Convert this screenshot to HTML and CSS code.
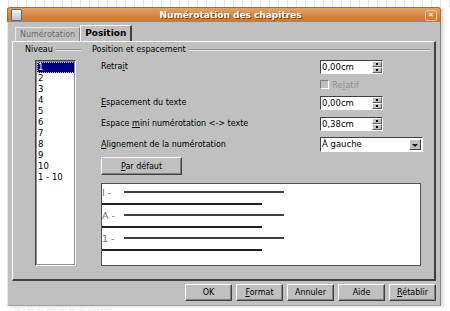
FILE: index.html
```html
<!DOCTYPE html>
<html lang="fr">
<head>
    <meta charset="UTF-8">
    <title>Numérotation des chapitres</title>
    <link rel="stylesheet" href="styles.css">
</head>
<body>
    <div class="ruler"></div>

    <div class="window">
        <div class="titlebar">
            <span class="app-icon"></span>
            <span class="title">Numérotation des chapitres</span>
            <span class="close">&#x2715;</span>
        </div>

        <div class="client">
            <div class="tabs">
                <div class="tab">Numérotation</div>
                <div class="tab active">Position</div>
            </div>

            <div class="panel">
                <div class="level-col">
                    <div class="group-head"><span>Niveau</span><i></i></div>
                    <div class="listbox">
                        <div class="item selected">1</div>
                        <div class="item">2</div>
                        <div class="item">3</div>
                        <div class="item">4</div>
                        <div class="item">5</div>
                        <div class="item">6</div>
                        <div class="item">7</div>
                        <div class="item">8</div>
                        <div class="item">9</div>
                        <div class="item">10</div>
                        <div class="item">1 - 10</div>
                    </div>
                </div>

                <div class="pos-col">
                    <div class="group-head"><span>Position et espacement</span><i></i></div>

                    <div class="form">
                        <div class="row r1">
                            <label>Retra<u>i</u>t</label>
                            <div class="spin"><span class="val">0,00cm</span><span class="btns"><b></b><b></b></span></div>
                        </div>
                        <div class="row relatif">
                            <label></label>
                            <div class="check"><span class="box"></span>Re<u>l</u>atif</div>
                        </div>
                        <div class="row r3">
                            <label><u>E</u>spacement du texte</label>
                            <div class="spin"><span class="val">0,00cm</span><span class="btns"><b></b><b></b></span></div>
                        </div>
                        <div class="row r4">
                            <label>Espace <u>m</u>ini numérotation &lt;-&gt; texte</label>
                            <div class="spin"><span class="val">0,38cm</span><span class="btns"><b></b><b></b></span></div>
                        </div>
                        <div class="row r5">
                            <label><u>A</u>lignement de la numérotation</label>
                            <div class="combo"><span class="val">À gauche</span><span class="drop"></span></div>
                        </div>

                        <button class="btn default"><u>P</u>ar défaut</button>

                        <div class="preview">
                            <div class="pv-row"><span class="num">I -</span><span class="line"></span></div>
                            <div class="pv-sep"></div>
                            <div class="pv-row"><span class="num">A -</span><span class="line"></span></div>
                            <div class="pv-sep"></div>
                            <div class="pv-row"><span class="num">1 -</span><span class="line"></span></div>
                            <div class="pv-sep"></div>
                        </div>
                    </div>
                </div>
            </div>

            <div class="actions">
                <button class="btn">OK</button>
                <button class="btn"><u>F</u>ormat</button>
                <button class="btn">Annuler</button>
                <button class="btn">Aide</button>
                <button class="btn"><u>R</u>établir</button>
            </div>
        </div>
    </div>

    <p class="behind">lors de un spécial au un travaillé</p>
</body>
</html>
```

FILE: styles.css
```css
body {
    margin: 0;
    background: #fff;
    font-family: "DejaVu Sans", sans-serif;
    font-size: 8px;
    color: #000;
    width: 450px;
    height: 311px;
    overflow: hidden;
}

u {
    text-decoration: underline;
}

.ruler {
    height: 7px;
    background: repeating-linear-gradient(to right, transparent 0, transparent 8px, #e4e4e4 8px, #e4e4e4 9px);
}

.window {
    margin-left: 7px;
    width: 434px;
    box-shadow: 3px 1px 2px rgba(0, 0, 0, 0.12);
}

.titlebar {
    height: 14px;
    background: linear-gradient(#e3a265, #cf8442 60%, #c77a38);
    border: 1px solid #b06a2c;
    border-bottom: none;
    border-radius: 3px 3px 0 0;
    display: flex;
    align-items: center;
}

.app-icon {
    width: 9px;
    height: 10px;
    margin-left: 3px;
    background: linear-gradient(#f4f4f4, #b8c4cc);
    border: 1px solid #5a6a78;
    border-radius: 1px;
}

.title {
    flex: 1;
    text-align: center;
    color: #fff;
    font-weight: bold;
    font-size: 9px;
    text-shadow: 1px 1px 0 #7a4818;
    margin-left: 14px;
}

.close {
    width: 10px;
    height: 9px;
    margin-right: 3px;
    border: 1px solid #f0c090;
    border-radius: 2px;
    color: #fff;
    font-size: 7px;
    line-height: 9px;
    text-align: center;
    font-weight: bold;
}

.client {
    background: #c0c0c0;
    border-left: 1px solid #e8e8e8;
    border-right: 1px solid #808080;
    border-bottom: 1px solid #a0a0a0;
    padding: 3px 4px 3px 4px;
}

.tabs {
    display: flex;
    padding-left: 3px;
    height: 16px;
    align-items: flex-end;
}

.tab {
    height: 13px;
    line-height: 13px;
    padding: 0 4px;
    color: #6a6a6a;
    border: 1px solid #e8e8e8;
    border-right-color: #808080;
    border-bottom: none;
}

.tab.active {
    height: 15px;
    line-height: 15px;
    color: #000;
    font-weight: bold;
    font-size: 9px;
    border-left: 1px solid #fff;
    border-top: 1px solid #fff;
    border-right: 2px solid #404040;
    background: #c0c0c0;
}

.panel {
    height: 234px;
    border-top: 1px solid #fff;
    border-left: 1px solid #fff;
    border-right: 2px solid #404040;
    border-bottom: 2px solid #404040;
    display: flex;
    padding: 3px 0 0 12px;
}

.group-head {
    display: flex;
    align-items: center;
    height: 9px;
}

.group-head i {
    flex: 1;
    height: 0;
    border-top: 1px solid #909090;
    border-bottom: 1px solid #e8e8e8;
    margin-left: 3px;
}

.level-col {
    width: 56px;
    display: flex;
    flex-direction: column;
}

.listbox {
    margin: 6px 0 0 10px;
    width: 38px;
    height: 203px;
    background: #fff;
    border: 1px solid;
    border-color: #404040 #fff #fff #404040;
    outline: 1px solid #909090;
    outline-offset: -2px;
    padding: 1px 0 0 1px;
}

.item {
    height: 11px;
    line-height: 11px;
    padding-left: 1px;
    font-size: 8.5px;
}

.item.selected {
    background: #000080;
    color: #fff;
    outline: 1px dotted #c0c0ff;
    outline-offset: -1px;
}

.pos-col {
    flex: 1;
    margin-left: 11px;
    margin-right: 3px;
    display: flex;
    flex-direction: column;
}

.form {
    padding-left: 9px;
    display: flex;
    flex-direction: column;
}

.row {
    display: flex;
    align-items: center;
    height: 15px;
}

.row label {
    width: 219px;
}

.r1 { margin-top: 5px; }
.relatif { height: 21px; }
.r4, .r5 { margin-top: 6px; }

.spin, .combo {
    height: 14px;
    background: #fff;
    border: 1px solid;
    border-color: #404040 #fff #fff #404040;
    display: flex;
    align-items: stretch;
    box-sizing: border-box;
}

.spin {
    width: 63px;
}

.combo {
    width: 103px;
    height: 15px;
}

.val {
    flex: 1;
    line-height: 12px;
    padding-left: 1px;
    font-size: 8.5px;
}

.combo .val {
    line-height: 13px;
}

.btns {
    width: 10px;
    display: flex;
    flex-direction: column;
    background: #c0c0c0;
}

.btns b {
    flex: 1;
    border: 1px solid;
    border-color: #fff #606060 #606060 #fff;
    position: relative;
}

.btns b::after {
    content: "";
    position: absolute;
    left: 3px;
    top: 1px;
    width: 2px;
    height: 2px;
    background: #000;
}

.drop {
    width: 10px;
    margin: 1px;
    background: #c0c0c0;
    border: 1px solid;
    border-color: #fff #404040 #404040 #fff;
    position: relative;
}

.drop::after {
    content: "";
    position: absolute;
    left: 2px;
    top: 4px;
    border-left: 3px solid transparent;
    border-right: 3px solid transparent;
    border-top: 3px solid #000;
}

.check {
    display: flex;
    align-items: center;
    color: #909090;
    font-size: 8.5px;
}

.box {
    width: 7px;
    height: 7px;
    border: 1px solid;
    border-color: #808080 #fff #fff #808080;
    margin-right: 3px;
}

.btn {
    font-family: "DejaVu Sans", sans-serif;
    font-size: 8px;
    color: #000;
    background: #c0c0c0;
    border: 1px solid;
    border-color: #fff #404040 #404040 #fff;
    box-shadow: inset -1px -1px 0 #808080;
    padding: 0;
    height: 17px;
}

.default {
    margin-top: 5px;
    width: 81px;
    height: 18px;
}

.preview {
    margin-top: 8px;
    width: 320px;
    height: 83px;
    box-sizing: border-box;
    background: #fff;
    border: 1px solid #505050;
    padding-top: 3px;
}

.pv-row {
    display: flex;
    align-items: center;
    height: 10px;
}

.num {
    width: 22px;
    color: #707070;
    font-size: 9.5px;
}

.line {
    width: 160px;
    border-top: 2px solid #404040;
}

.pv-sep {
    width: 160px;
    border-top: 2px solid #202020;
    margin: 6px 0 5px;
}

.actions {
    display: flex;
    justify-content: flex-end;
    gap: 4px;
    padding: 3px 0 1px;
}

.actions .btn {
    width: 47px;
}

.behind {
    margin: 0 0 0 14px;
    line-height: 6px;
    color: #e8e8e8;
    font-size: 6px;
}
```
